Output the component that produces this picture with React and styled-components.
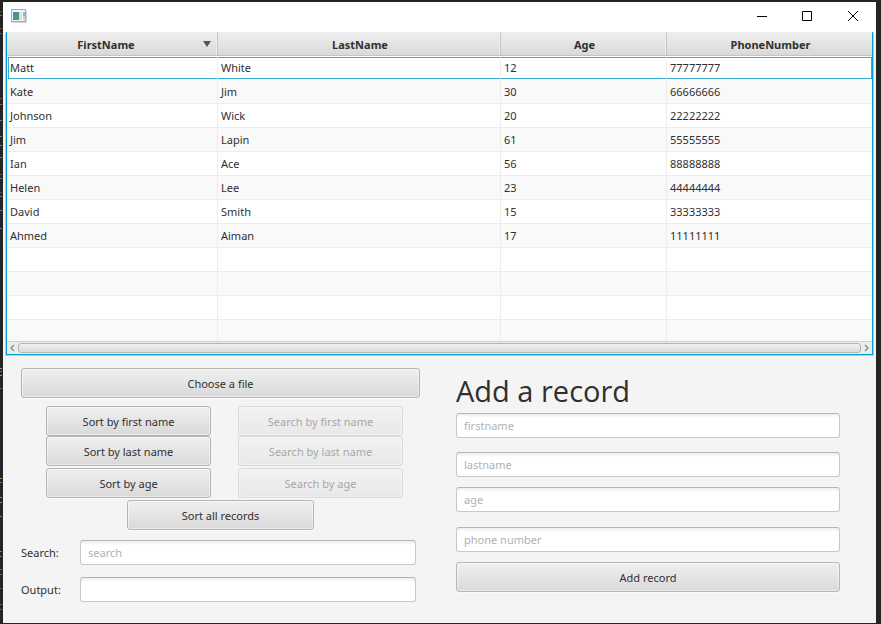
import React from "react";
import styled, { createGlobalStyle, css } from "styled-components";

const GlobalStyle = createGlobalStyle`
  * { box-sizing: border-box; }
  body {
    margin: 0;
    background: #242424;
    color: #303030;
    font: 11px/16px "Noto Sans", "Open Sans", sans-serif;
  }
  button, input { font: inherit; color: inherit; }
`;

const Desktop = styled.div`
  display: grid;
  grid-template-columns: 3px minmax(0, 1fr);
  height: 100vh;
  padding: 2px 5px 1px 0;
`;

const CodeSliver = styled.svg`
  width: 3px;
  height: 621px;
`;

const Window = styled.main`
  display: flex;
  flex-direction: column;
  min-height: 0;
  background: #f4f4f4;
`;

const TitleBar = styled.header`
  display: flex;
  align-items: center;
  height: 30px;
  padding: 0 0 2px 8px;
  background: #fff;
`;

const CaptionButtons = styled.div`
  display: flex;
  margin-left: auto;
`;

const CaptionButton = styled.button`
  display: grid;
  place-items: center;
  width: 46px;
  height: 28px;
  padding: 0;
  border: 0;
  background: none;
`;

const TableFrame = styled.section`
  display: flex;
  flex: 1;
  flex-direction: column;
  min-height: 0;
  margin: 0 3px 1px;
  border: solid #039ed3;
  border-width: 0 1px 1px;
  box-shadow: 0 1px 0 #9fd6ea, 1px 1px 0 #9fd6ea, -1px 1px 0 #9fd6ea;
  clip-path: inset(0 -2px -2px -2px);
`;

const TableViewport = styled.div`
  flex: 1;
  min-height: 0;
  overflow: hidden;
  background: #fff;
`;

const Records = styled.table`
  width: 100%;
  border-collapse: separate;
  border-spacing: 0;
  table-layout: fixed;
`;

const Column = styled.col`
  width: ${(p) => p.$width};
`;

const HeaderCell = styled.th`
  height: 24px;
  padding: 0;
  border: solid #c4c4c4;
  border-width: 0 1px 1px 0;
  background: linear-gradient(#efefef, #d9d9d9);
  box-shadow: inset -1px 0 0 #f0f0f0;
  &:last-child { border-right: 0; box-shadow: none; }
`;

const HeaderButton = styled.button`
  display: flex;
  align-items: center;
  width: 100%;
  height: 23px;
  padding: 2px 0 0 2px;
  border: 0;
  background: none;
  font-weight: 700;
`;

const HeaderLabel = styled.span`
  flex: 1;
  text-align: center;
`;

const SortArrow = styled.svg`
  width: 8px;
  height: 6px;
  margin: 0 6px 2px 0;
`;

const Cell = styled.td`
  height: 24px;
  padding: 0 3px;
  border: solid #ededed;
  border-width: 0 1px 1px 0;
  &:last-child { border-right: 0; }
`;

const Row = styled.tr`
  background: #fff;
  &:nth-child(even) { background: #f9f9f9; }
  ${(p) =>
    p.$focused &&
    css`
      ${Cell} {
        border-bottom-color: #fff;
        box-shadow: inset 0 1px 0 #fff, inset 0 2px 0 #36abd3, inset 0 -1px 0 #36abd3;
      }
      ${Cell}:first-child {
        box-shadow: inset 1px 1px 0 #fff, inset 2px 2px 0 #36abd3, inset 0 -1px 0 #36abd3;
      }
      ${Cell}:last-child {
        box-shadow: inset 0 1px 0 #fff, inset -1px 2px 0 #36abd3, inset 0 -1px 0 #36abd3;
      }
    `}
`;

const ScrollBar = styled.div`
  display: flex;
  align-items: center;
  height: 13px;
  border-top: 1px solid #d0d0d0;
  background: #ececec;
`;

const ScrollArrow = styled.button`
  display: grid;
  place-items: center;
  width: 11px;
  height: 12px;
  padding: 0;
  border: 0;
  background: none;
`;

const ScrollThumb = styled.div`
  flex: 1;
  height: 10px;
  border: 1px solid #b4b4b4;
  border-radius: 3px;
  background: linear-gradient(#f0f0f0, #dcdcdc);
`;

const Controls = styled.div`
  display: grid;
  grid-template-columns: minmax(0, 399fr) minmax(0, 384fr);
  column-gap: 36px;
  padding: 12px 36px 21px 18px;
`;

const Panel = styled.section`
  display: flex;
  flex-direction: column;
`;

const Button = styled.button`
  width: 100%;
  height: 30px;
  padding: 1px 8px 0;
  border: 1px solid #b5b5b5;
  border-radius: 3px;
  background: linear-gradient(#f0f0f0, #d9d9d9);
  box-shadow: inset 0 0 0 1px rgba(255, 255, 255, 0.45), 0 1px 0 #fafafa;
  &:disabled { opacity: 0.4; }
`;

const ActionGrid = styled.div`
  display: grid;
  grid-template-columns: 1fr 1fr;
  grid-template-rows: 30px 30px 30px;
  column-gap: 27px;
  padding: 8px 17px 2px 25px;
  ${Button}:nth-child(n + 5) { margin-top: 2px; }
`;

const SortAllRow = styled.div`
  display: grid;
  grid-template-columns: 187px;
  justify-content: center;
  padding: 2px 0 10px;
`;

const Field = styled.div`
  display: grid;
  grid-template-columns: 59px minmax(0, 1fr);
  align-items: center;
  padding-right: 4px;
  & + & { margin-top: 12px; }
`;

const TextInput = styled.input`
  width: 100%;
  height: 25px;
  padding: 0 7px 1px;
  border: 1px solid #c8c8c8;
  border-top-color: #b5b5b5;
  border-radius: 3px;
  outline: 0;
  background: linear-gradient(#ededed, #fff 4px);
  &::placeholder { color: #b1b1b1; opacity: 1; }
`;

const Title = styled.h1`
  margin: 0;
  font-family: "Open Sans", "Noto Sans", sans-serif;
  font-size: 29px;
  font-weight: 400;
  line-height: 45px;
`;

const RecordForm = styled.form`
  display: grid;
  grid-template-rows: 39px 35px 40px 35px 30px;
`;

const columns = [
  { title: "FirstName", width: "211px", sorted: true },
  { title: "LastName", width: "283px" },
  { title: "Age", width: "166px" },
  { title: "PhoneNumber", width: "auto" },
];

const people = [
  ["Matt", "White", "12", "77777777"],
  ["Kate", "Jim", "30", "66666666"],
  ["Johnson", "Wick", "20", "22222222"],
  ["Jim", "Lapin", "61", "55555555"],
  ["Ian", "Ace", "56", "88888888"],
  ["Helen", "Lee", "23", "44444444"],
  ["David", "Smith", "15", "33333333"],
  ["Ahmed", "Aiman", "17", "11111111"],
];
const emptyRows = Array.from({ length: 4 }, () => ["", "", "", ""]);

const actions = [
  ["Sort by first name", "Search by first name"],
  ["Sort by last name", "Search by last name"],
  ["Sort by age", "Search by age"],
];

const slivers = [
  [11, "#5f4a3a"], [15, "#6f7480"], [28, "#8a5a34"], [33, "#8a5a34"],
  [98, "#8a5a34"], [104, "#a5662f"], [120, "#7c8088"], [136, "#7c8088"],
  [145, "#7c8088"], [157, "#7c8088"], [174, "#824444"], [178, "#7c8088"],
  [192, "#824444"], [196, "#7c8088"], [210, "#7c8088"], [228, "#7c8088"],
  [368, "#9a9a9a"], [371, "#3d72b5"], [375, "#9a9a9a"], [388, "#666"],
  [478, "#b58b3c"], [482, "#8a7a40"], [497, "#8189a0"], [502, "#8189a0"],
  [516, "#8189a0"], [551, "#777"], [556, "#777"], [569, "#75558b"],
  [574, "#a5592f"], [588, "#8a4444"], [604, "#75558b"], [609, "#75558b"],
];

const WindowIcon = () => (
  <svg width="16" height="14" viewBox="0 0 16 14" aria-hidden="true">
    <defs>
      <linearGradient id="pane" x1="0" y1="0" x2="1" y2="1">
        <stop offset="0" stopColor="#4a86b8" />
        <stop offset="1" stopColor="#47a06a" />
      </linearGradient>
    </defs>
    <rect x="0.5" y="0.5" width="14" height="12" fill="#f4f5f8" stroke="#a6a9b4" />
    <path d="M1 13.5H15.5V2" fill="none" stroke="#d2d4da" />
    <rect x="2" y="3" width="6" height="8" fill="url(#pane)" />
    <rect x="8" y="3" width="3" height="8" fill="#dcdedf" />
    <rect x="12" y="3" width="2" height="4" fill="#8fb7cf" />
    <rect x="12" y="7" width="2" height="4" fill="#c8dccb" />
  </svg>
);

const captions = [
  ["Minimize", "M2 6.5H12"],
  ["Maximize", "M1.5 1.5H10.5V10.5H1.5Z"],
  ["Close", "M1 1L11 11M11 1L1 11"],
];

export default function App() {
  return (
    <>
      <GlobalStyle />
      <Desktop>
        <CodeSliver aria-hidden="true">
          {slivers.map(([y, color]) => (
            <rect key={y} x="0" y={y - 2} width="2" height="1" fill={color} />
          ))}
        </CodeSliver>
        <Window>
          <TitleBar>
            <WindowIcon />
            <CaptionButtons>
              {captions.map(([name, d]) => (
                <CaptionButton key={name} type="button" aria-label={name}>
                  <svg width="12" height="12" viewBox="0 0 12 12" aria-hidden="true">
                    <path d={d} fill="none" stroke="#000" />
                  </svg>
                </CaptionButton>
              ))}
            </CaptionButtons>
          </TitleBar>

          <TableFrame>
            <TableViewport>
              <Records>
                <colgroup>
                  {columns.map((c) => (
                    <Column key={c.title} $width={c.width} />
                  ))}
                </colgroup>
                <thead>
                  <tr>
                    {columns.map((c) => (
                      <HeaderCell key={c.title} scope="col" aria-sort={c.sorted ? "descending" : undefined}>
                        <HeaderButton type="button">
                          <HeaderLabel>{c.title}</HeaderLabel>
                          {c.sorted && (
                            <SortArrow viewBox="0 0 8 6" aria-hidden="true">
                              <path d="M0 0H8L4 6Z" fill="#555" />
                            </SortArrow>
                          )}
                        </HeaderButton>
                      </HeaderCell>
                    ))}
                  </tr>
                </thead>
                <tbody>
                  {[...people, ...emptyRows].map((row, i) => (
                    <Row key={i} $focused={i === 0}>
                      {row.map((value, j) => (
                        <Cell key={j}>{value}</Cell>
                      ))}
                    </Row>
                  ))}
                </tbody>
              </Records>
            </TableViewport>
            <ScrollBar>
              <ScrollArrow type="button" aria-label="Scroll left">
                <svg width="5" height="8" viewBox="0 0 5 8" aria-hidden="true">
                  <path d="M4 1L1 4L4 7" fill="none" stroke="#8a8a8a" strokeWidth="1.3" />
                </svg>
              </ScrollArrow>
              <ScrollThumb />
              <ScrollArrow type="button" aria-label="Scroll right">
                <svg width="5" height="8" viewBox="0 0 5 8" aria-hidden="true">
                  <path d="M1 1L4 4L1 7" fill="none" stroke="#8a8a8a" strokeWidth="1.3" />
                </svg>
              </ScrollArrow>
            </ScrollBar>
          </TableFrame>

          <Controls>
            <Panel>
              <Button type="button">Choose a file</Button>
              <ActionGrid>
                {actions.map(([sort, search]) => (
                  <React.Fragment key={sort}>
                    <Button type="button">{sort}</Button>
                    <Button type="button" disabled>{search}</Button>
                  </React.Fragment>
                ))}
              </ActionGrid>
              <SortAllRow>
                <Button type="button">Sort all records</Button>
              </SortAllRow>
              <Field>
                <label htmlFor="search">Search:</label>
                <TextInput id="search" placeholder="search" />
              </Field>
              <Field>
                <label htmlFor="output">Output:</label>
                <TextInput id="output" readOnly />
              </Field>
            </Panel>

            <Panel>
              <Title>Add a record</Title>
              <RecordForm onSubmit={(e) => e.preventDefault()}>
                {["firstname", "lastname", "age", "phone number"].map((name) => (
                  <TextInput key={name} aria-label={name} placeholder={name} />
                ))}
                <Button type="submit">Add record</Button>
              </RecordForm>
            </Panel>
          </Controls>
        </Window>
      </Desktop>
    </>
  );
}
